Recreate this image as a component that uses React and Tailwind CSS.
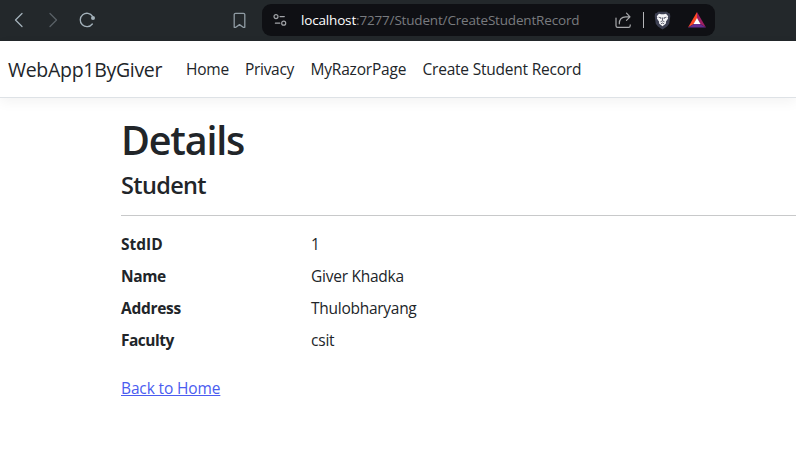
import React from "react";

const rows = [
  { label: "StdID", value: "1", l: "tracking-normal", v: "tracking-normal" },
  { label: "Name", value: "Giver Khadka", l: "tracking-[-0.4px]", v: "tracking-[-0.25px]" },
  { label: "Address", value: "Thulobharyang", l: "tracking-[-0.3px]", v: "tracking-[-0.27px]" },
  { label: "Faculty", value: "csit", l: "tracking-[-0.5px]", v: "tracking-[-0.2px]" },
];

function BackIcon() {
  return (
    <svg width="10" height="16" viewBox="0 0 10 16" fill="none" stroke="#a3b1ba" strokeWidth="1.3" strokeLinecap="round" strokeLinejoin="round">
      <path d="M8 1.5 1.5 8 8 14.5" />
    </svg>
  );
}

function ForwardIcon() {
  return (
    <svg width="10" height="16" viewBox="0 0 10 16" fill="none" stroke="#596066" strokeWidth="1.3" strokeLinecap="round" strokeLinejoin="round">
      <path d="M2 1.5 8.5 8 2 14.5" />
    </svg>
  );
}

function ReloadIcon() {
  return (
    <svg width="18" height="16" viewBox="0 0 18 16" fill="none">
      <path d="M13.6 4.3A6.7 6.7 0 1 0 13.3 12" stroke="#a3b1ba" strokeWidth="1.35" strokeLinecap="round" />
      <circle cx="14" cy="6.1" r="2" fill="#a3b1ba" />
    </svg>
  );
}

function BookmarkIcon() {
  return (
    <svg width="13" height="17" viewBox="0 0 13 17" fill="none" stroke="#8f9ba3" strokeWidth="1.3" strokeLinejoin="round">
      <path d="M2.5 1.3h8a1.3 1.3 0 0 1 1.3 1.3v12.7H10.2L6.5 12.6 2.8 15.3H1.2V2.6a1.3 1.3 0 0 1 1.3-1.3Z" />
    </svg>
  );
}

function SiteIcon() {
  return (
    <svg width="14" height="14" viewBox="0 0 14 14" fill="none" stroke="#a2a4a8" strokeWidth="1.2" strokeLinecap="round">
      <circle cx="3" cy="3.6" r="2" />
      <path d="M7 3.6h4.3M2.4 10.2h4.4" />
      <circle cx="10.7" cy="10.2" r="2" />
    </svg>
  );
}

function ShareIcon() {
  return (
    <svg width="17" height="17" viewBox="0 0 17 17" fill="none" stroke="#a8a9ac" strokeWidth="1.2" strokeLinecap="round" strokeLinejoin="round">
      <path d="M1 6v7.8a1.6 1.6 0 0 0 1.6 1.6h11a1.6 1.6 0 0 0 1.6-1.6v-.9" />
      <path d="M4.3 11.8c0-4.5 2.5-7 6.5-7H15M11.5 1.2 15 4.8l-3.5 3.5" />
    </svg>
  );
}

function ShieldIcon() {
  return (
    <svg width="17" height="19" viewBox="0 0 17 19">
      <path d="M4.1.8h8.8l1.3 1.3 1.7.3.4 2.8-1.1 7.5-2.2 2.8-4.5 3-4.5-3-2.2-2.8L.7 5.2l.4-2.8 1.7-.3Z" fill="#3d4052" />
      <path d="m5 2.8 2.1.4h2.8l2.1-.4 2.2 2.4-.5 1.2.4 1.2-2.1 3-.1 1.9-3.4 2.7-3.4-2.7-.1-1.9-2.1-3 .4-1.2-.5-1.2Z" fill="#f4f4f7" />
      <path d="m4.6 6.2 2.6.7-.6 1M12.4 6.2l-2.6.7.6 1M8.5 6.5v3M6.5 10.8l2-1 2 1M7 12.8l1.5-.8 1.5.8" fill="none" stroke="#3d4052" strokeWidth=".8" />
    </svg>
  );
}

function RewardsIcon() {
  return (
    <svg width="18" height="16" viewBox="0 0 18 16">
      <path d="M9 0 0 15.5 5.8 12 9 6.2Z" fill="#ff4724" />
      <path d="m9 0 9 15.5-5.8-3.5L9 6.2Z" fill="#9e1f63" />
      <path d="M0 15.5h18L12.2 12H5.8Z" fill="#662d91" />
      <path d="m9 6-3.5 6.1h7Z" fill="#fff" />
    </svg>
  );
}

function BrowserBar() {
  return (
    <header className="flex h-[41px] items-start bg-[#23282b] pt-1">
      <div className="flex h-8 w-[262px] items-center">
        <span className="ml-[14px]"><BackIcon /></span>
        <span className="ml-[24px]"><ForwardIcon /></span>
        <span className="ml-[21px]"><ReloadIcon /></span>
        <span className="ml-auto mr-[16.5px]"><BookmarkIcon /></span>
      </div>
      <div className="flex h-8 w-[453px] items-center rounded-[9px] bg-[#0f1014]">
        <span className="ml-[11px]"><SiteIcon /></span>
        <div className="ml-[14px] w-[300px] whitespace-nowrap text-[13.5px] leading-8 tracking-[-0.17px] text-[#797b7f]">
          <span className="text-white">localhost</span>:7277/Student/CreateStudentRecord
        </div>
        <span className="ml-[14px]"><ShareIcon /></span>
        <span className="ml-[11px] h-4 w-px bg-[#b5b6b8]" />
        <span className="ml-[10px]"><ShieldIcon /></span>
        <span className="ml-[17px]"><RewardsIcon /></span>
      </div>
    </header>
  );
}

export default function App() {
  return (
    <div className="h-[470px] w-[796px] overflow-hidden bg-white font-['Open_Sans','Noto_Sans',sans-serif] text-[#212529] [&_svg]:block">
      <BrowserBar />
      <nav className="flex h-[57px] items-center whitespace-nowrap border-b border-[#dee2e6] bg-white pl-2 pt-[2px] text-[15.5px] shadow-[0_4px_12px_rgba(0,0,0,0.05)]">
        <a className="w-[178px] text-[19.5px] tracking-[-0.3px]">WebApp1ByGiver</a>
        <a className="w-[59px] tracking-[-0.2px]">Home</a>
        <a className="w-[65.5px] tracking-[-0.3px]">Privacy</a>
        <a className="w-[112px] tracking-[-0.2px]">MyRazorPage</a>
        <a className="tracking-[-0.22px]">Create Student Record</a>
      </nav>
      <main className="ml-[121px] pt-[18px]">
        <h1 className="text-[39.5px] font-semibold leading-[48px] tracking-[-1.2px]">Details</h1>
        <h4 className="mt-[7px] text-[23.5px] font-semibold leading-[29px] tracking-[-0.65px]">Student</h4>
        <hr className="mt-[15px] border-t border-[#c8c9ca]" />
        <dl className="mt-4 text-[15.5px] leading-6">
          {rows.map((row) => (
            <div key={row.label} className="mb-2 flex">
              <dt className={"w-[190px] font-bold " + row.l}>{row.label}</dt>
              <dd className={row.v}>{row.value}</dd>
            </div>
          ))}
        </dl>
        <a className="mt-4 inline-block text-[15.5px] leading-6 tracking-[-0.13px] text-[#4a5cf0] underline underline-offset-1">Back to Home</a>
      </main>
    </div>
  );
}
